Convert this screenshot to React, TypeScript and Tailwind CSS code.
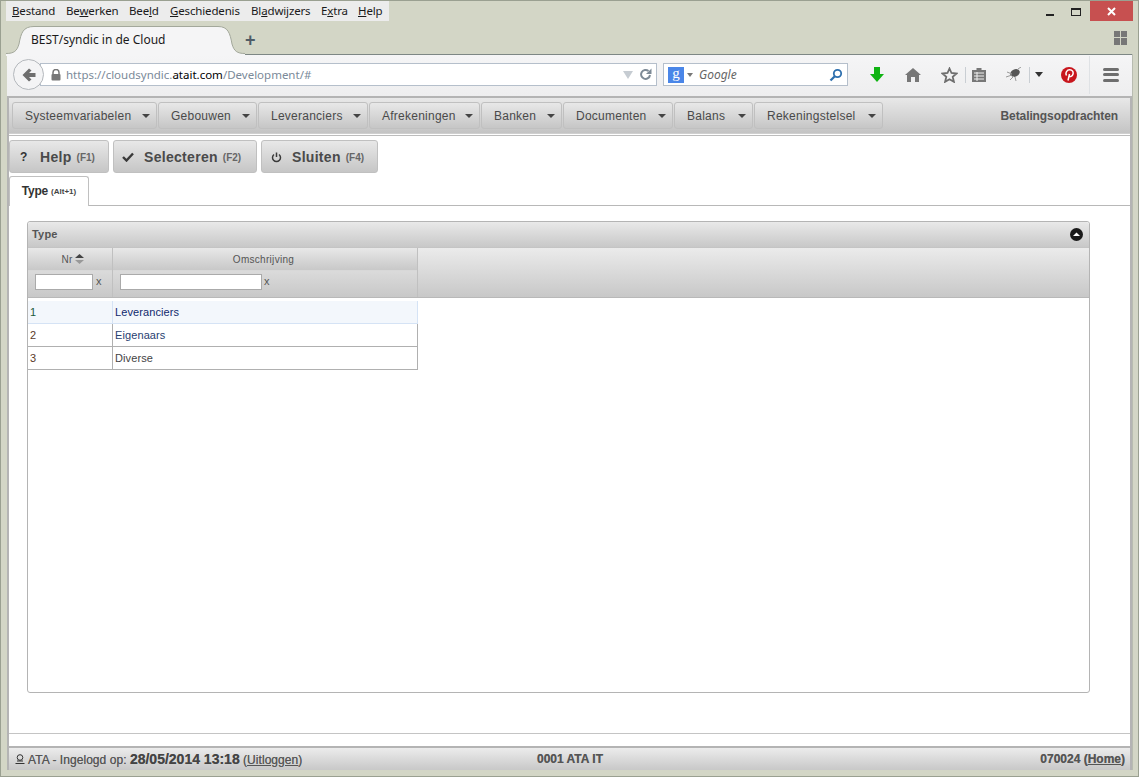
import React from "react";

const firefoxFont = "font-['Noto_Sans','Open_Sans',sans-serif]";

const menuItems: { before: string; key: string; after: string; width: string }[] = [
  { before: "", key: "B", after: "estand", width: "w-[54px]" },
  { before: "Be", key: "w", after: "erken", width: "w-[63px]" },
  { before: "Bee", key: "l", after: "d", width: "w-[41px]" },
  { before: "", key: "G", after: "eschiedenis", width: "w-[81px]" },
  { before: "Bl", key: "a", after: "dwijzers", width: "w-[70px]" },
  { before: "E", key: "x", after: "tra", width: "w-[37px]" },
  { before: "", key: "H", after: "elp", width: "w-[31px]" },
];

const navMenus = [
  { label: "Systeemvariabelen", width: "w-[145px]" },
  { label: "Gebouwen", width: "w-[99px]" },
  { label: "Leveranciers", width: "w-[110px]" },
  { label: "Afrekeningen", width: "w-[111px]" },
  { label: "Banken", width: "w-[81px]" },
  { label: "Documenten", width: "w-[110px]" },
  { label: "Balans", width: "w-[79px]" },
  { label: "Rekeningstelsel", width: "w-[129px]" },
];

const rows = [
  { nr: "1", name: "Leveranciers", rowCls: "bg-[#f3f7fc] border-[#d5e3f5]", nameCls: "text-[#11296e]", nrCls: "text-[#1c5a3a]" },
  { nr: "2", name: "Eigenaars", rowCls: "bg-white border-[#b0b0b0]", nameCls: "text-[#27406f]", nrCls: "text-[#5a3a2a]" },
  { nr: "3", name: "Diverse", rowCls: "bg-white border-[#b0b0b0]", nameCls: "text-[#444]", nrCls: "text-[#5a3a2a]" },
];

function BrowserTab() {
  return (
    <div className="relative z-10 h-[28px] w-[250px]">
      <svg className="absolute left-0 top-0" width="250" height="30" viewBox="0 0 250 30">
        <path
          d="M0 27.5 C8 27.5 11 25 13 18 C15 7 17 .5 28 .5 L212 .5 C222 .5 224 7 226 18 C228 25 231 27.5 239 27.5 V30 H0 Z"
          fill="#f5f5f6"
        />
        <path
          d="M0 27.5 C8 27.5 11 25 13 18 C15 7 17 .5 28 .5 L212 .5 C222 .5 224 7 226 18 C228 25 231 27.5 239 27.5"
          fill="none"
          stroke="#a3a89b"
          strokeWidth="1"
        />
      </svg>
      <span className={`absolute left-[25px] top-[5px] text-[12px] text-[#1a1a1a] ${firefoxFont}`}>BEST/syndic in de Cloud</span>
    </div>
  );
}

function BackButton() {
  return (
    <div className="relative z-10 flex h-[31px] w-[31px] items-center justify-center rounded-full border border-[#b4b8bc] bg-[#f4f4f5]">
      <svg width="16" height="16" viewBox="0 0 16 16">
        <path d="M8 1.5 L1.5 8 L8 14.5 L10.5 12.5 L8 10 H14.5 V6 H8 L10.5 3.5 Z" fill="#6e6e6e" />
      </svg>
    </div>
  );
}

function Toolbar() {
  return (
    <div className="flex h-[42px] items-center bg-gradient-to-b from-[#f5f5f6] to-[#eeeeef] border-t border-[#7d8784] pb-[2px]">
      <div className="ml-[6px]">
        <BackButton />
      </div>
      {/* url bar */}
      <div className="ml-[-4px] flex h-[23px] w-[617px] items-center border border-[#b5bfcb] bg-white pl-[10px]">
        <svg width="10" height="12" viewBox="0 0 10 12">
          <path d="M2 5 V3.5 a3 3 0 0 1 6 0 V5" fill="none" stroke="#777" strokeWidth="1.5" />
          <rect x="0.5" y="5" width="9" height="6.5" rx="1" fill="#777" />
        </svg>
        <span className={`ml-[5px] text-[11.5px] text-[#7b8a99] ${firefoxFont}`}>
          https://cloudsyndic.<span className="text-black">atait.com</span>/Development/#
        </span>
        <svg className="ml-auto" width="10" height="8" viewBox="0 0 10 8">
          <path d="M0 0 H10 L5 8 Z" fill="#c6ccd2" />
        </svg>
        <svg className="ml-[6px] mr-[4px]" width="13" height="13" viewBox="0 0 13 13">
          <path d="M11 7 A4.5 4.5 0 1 1 9.5 3" fill="none" stroke="#7d8a96" strokeWidth="2" />
          <path d="M12.5 0.5 V6 H7 Z" fill="#7d8a96" />
        </svg>
      </div>
      {/* search box */}
      <div className="ml-[6px] flex h-[23px] w-[185px] items-center border border-[#b5bfcb] bg-white pl-[4px]">
        <div className="flex h-[16px] w-[16px] items-center justify-center bg-[#4a86e8] pb-[3px] text-[15px] leading-none text-white font-['Liberation_Serif',serif]">
          g
        </div>
        <svg className="ml-[3px]" width="6" height="4" viewBox="0 0 6 4">
          <path d="M0 0 H6 L3 4 Z" fill="#777" />
        </svg>
        <span className={`ml-[6px] text-[12px] italic text-[#666] ${firefoxFont}`}>Google</span>
        <svg className="ml-auto mr-[4px]" width="14" height="14" viewBox="0 0 14 14">
          <circle cx="8.5" cy="5.5" r="3.7" fill="none" stroke="#2d6fae" strokeWidth="1.8" />
          <path d="M5.8 8.2 L1.5 12.5" stroke="#2d6fae" strokeWidth="2.2" />
        </svg>
      </div>
      {/* download arrow */}
      <svg className="ml-[22px]" width="14" height="15" viewBox="0 0 14 15">
        <path d="M4 0 H10 V7 H14 L7 15 L0 7 H4 Z" fill="#0fb312" />
      </svg>
      {/* home */}
      <svg className="ml-[21px]" width="16" height="14" viewBox="0 0 16 14">
        <path d="M8 0 L16 7 H14 V14 H10 V9 H6 V14 H2 V7 H0 Z" fill="#777" />
      </svg>
      {/* bookmark star */}
      <svg className="ml-[20px]" width="17" height="16" viewBox="0 0 17 16">
        <path d="M8.5 1.5 L10.5 6 L15.5 6.5 L11.7 9.8 L12.9 14.8 L8.5 12.2 L4.1 14.8 L5.3 9.8 L1.5 6.5 L6.5 6 Z" fill="none" stroke="#6e6e6e" strokeWidth="1.8" />
      </svg>
      <div className="ml-[7px] h-[16px] w-px bg-[#c9ced3]" />
      {/* clipboard list */}
      <svg className="ml-[6px]" width="14" height="15" viewBox="0 0 14 15">
        <path d="M0 3 H4.5 V1 H9.5 V3 H14 V15 H0 Z" fill="#777" />
        <path d="M2 6 H12 M2 9 H12 M2 12 H12 M5 5 V14" stroke="#f1f1f1" strokeWidth="1" />
      </svg>
      {/* bug addon */}
      <svg className="ml-[19px]" width="17" height="15" viewBox="0 0 17 15">
        <ellipse cx="10" cy="6" rx="5" ry="3.6" fill="#555" transform="rotate(-25 10 6)" />
        <path d="M2 5 L7 7 M1 10 L7 8 M5 13 L9 9 M10 10 L11 14 M13 2 L16 0" stroke="#999" strokeWidth="1" />
      </svg>
      <div className="ml-[7px] h-[16px] w-px bg-[#c9ced3]" />
      <svg className="ml-[5px]" width="8" height="5" viewBox="0 0 8 5">
        <path d="M0 0 H8 L4 5 Z" fill="#333" />
      </svg>
      {/* pinterest */}
      <div className="ml-[18px] flex h-[16px] w-[16px] items-center justify-center rounded-full bg-[#c8161d]">
        <svg width="9" height="12" viewBox="0 0 9 12">
          <path d="M3 11.5 L4.5 5 M1.5 6.5 C0 3.5 2 .8 4.7 .8 C7.5 .8 8.5 3 8 5 C7.5 7.5 5 8.2 3.8 6.8" fill="none" stroke="#fff" strokeWidth="1.5" />
        </svg>
      </div>
      <div className="ml-[12px] h-[38px] w-px bg-[#dfe2e5]" />
      {/* hamburger */}
      <div className="ml-[13px] flex w-[16px] flex-col gap-[2.5px]">
        <div className="h-[3px] rounded-sm bg-[#6e6e6e]" />
        <div className="h-[3px] rounded-sm bg-[#6e6e6e]" />
        <div className="h-[3px] rounded-sm bg-[#6e6e6e]" />
      </div>
    </div>
  );
}

function NavMenu({ label, width }: { label: string; width: string }) {
  return (
    <div className={`flex h-[27px] items-center justify-between rounded-[3px] border border-[#c0c0c0] bg-gradient-to-b from-[#e8e8e8] to-[#c6c6c6] pl-[12px] pr-[6px] ${width}`}>
      <span className="tracking-[0.25px] text-[#4a4a4a]">{label}</span>
      <svg width="8" height="4" viewBox="0 0 8 4">
        <path d="M0 0 H8 L4 4 Z" fill="#444" />
      </svg>
    </div>
  );
}

function ActionButton({ icon, label, fkey, width }: { icon: React.ReactNode; label: string; fkey: string; width: string }) {
  return (
    <div className={`flex h-[33px] items-center rounded-[3px] border border-[#c0c0c0] bg-gradient-to-b from-[#e8e8e8] to-[#c6c6c6] pl-[8px] pt-[1px] ${width}`}>
      <span className="flex w-[22px] justify-start">{icon}</span>
      <span className="text-[14px] font-bold tracking-[0.3px] text-[#4a4a4a]">{label}</span>
      <span className="ml-[5px] text-[10px] font-bold text-[#666]">{fkey}</span>
    </div>
  );
}

function ItemTable() {
  return (
    <div className="w-[390px] text-[11px]">
      {rows.map((r) => (
        <div key={r.nr} className={`flex h-[23px] items-center border-b border-r ${r.rowCls}`}>
          <span className={`h-full w-[85px] border-r pl-[2px] leading-[22px] ${r.rowCls} ${r.nrCls}`}>{r.nr}</span>
          <span className={`pl-[2px] tracking-[0.1px] ${r.nameCls}`}>{r.name}</span>
        </div>
      ))}
    </div>
  );
}

function TypePanel() {
  return (
    <div className="ml-[18px] mr-[40px] mt-[15px] mb-[40px] flex flex-1 flex-col rounded-[3px] border border-[#b4b4b4] bg-white">
      <div className="flex h-[26px] items-center justify-between rounded-t-[3px] border-b border-[#c4c4c4] bg-gradient-to-b from-[#e9e9e9] to-[#c8c8c8] pl-[4px] pr-[6px]">
        <span className="text-[11px] font-bold tracking-[0.2px] text-[#555]">Type</span>
        <svg width="13" height="13" viewBox="0 0 13 13">
          <circle cx="6.5" cy="6.5" r="6.5" fill="#1a1a1a" />
          <path d="M3 8 L6.5 4.5 L10 8 Z" fill="#fff" />
        </svg>
      </div>
      {/* grid header: column captions and filter row */}
      <div className="flex h-[50px] border-b border-[#b8b8b8] bg-gradient-to-b from-[#ebebeb] to-[#c8c8c8] text-[10px] text-[#555]">
        <div className="flex w-[85px] flex-col border-r border-[#c0c0c0]">
          <div className="flex h-[23px] items-center justify-center gap-[3px] border-b border-[#d8d8d8] bg-gradient-to-b from-[#e8e8e8] to-[#c8c8c8] pl-[6px]">
            <span className="tracking-[0.2px]">Nr</span>
            <svg width="9" height="10" viewBox="0 0 9 10">
              <path d="M0 4 L4.5 0 L9 4 Z" fill="#444" />
              <path d="M0 6 L4.5 10 L9 6 Z" fill="#999" />
            </svg>
          </div>
          <div className="flex flex-1 items-start pl-[7px] pt-[3px]">
            <div className="h-[16px] w-[58px] border border-[#aaa] bg-white" />
            <span className="ml-[3px] text-[11px] leading-[14px]">x</span>
          </div>
        </div>
        <div className="flex w-[305px] flex-col border-r border-[#c0c0c0]">
          <div className="flex h-[23px] items-center justify-center border-b border-[#d8d8d8] bg-gradient-to-b from-[#e8e8e8] to-[#c8c8c8] pr-[3px]">
            <span className="tracking-[0.3px]">Omschrijving</span>
          </div>
          <div className="flex flex-1 items-start pl-[7px] pt-[3px]">
            <div className="h-[16px] w-[142px] border border-[#aaa] bg-white" />
            <span className="ml-[2px] text-[11px] leading-[14px]">x</span>
          </div>
        </div>
      </div>
      <div className="mt-[3px]">
        <ItemTable />
      </div>
    </div>
  );
}

export default function App() {
  return (
    <div className="flex h-[777px] w-[1139px] flex-col overflow-hidden border border-[#9aa091] bg-[#d3d6c6]">
      {/* window title row with the classic menu */}
      <div className="flex h-[21px] items-start justify-between pl-[5px]">
        <div className={`flex h-[20px] items-center bg-[#ececec] pl-[6px] text-[11.5px] text-[#1a1a1a] ${firefoxFont}`}>
          {menuItems.map((m) => (
            <span key={m.key + m.after} className={`whitespace-nowrap tracking-[-0.15px] ${m.width}`}>
              {m.before}
              <span className="underline">{m.key}</span>
              {m.after}
            </span>
          ))}
        </div>
        <div className="flex items-start">
          <div className="flex h-[20px] w-[25px] items-center justify-center">
            <div className="mt-[7px] h-[2px] w-[8px] bg-[#222]" />
          </div>
          <div className="flex h-[20px] w-[28px] items-center justify-center">
            <div className="mt-[2px] h-[8px] w-[10px] border border-t-2 border-[#222]" />
          </div>
          <div className="mr-[5px] flex h-[20px] w-[43px] items-center justify-center bg-[#c75050]">
            <svg width="9" height="9" viewBox="0 0 9 9">
              <path d="M1 1 L8 8 M8 1 L1 8" stroke="#fff" strokeWidth="2" />
            </svg>
          </div>
        </div>
      </div>

      {/* tab strip */}
      <div className="mt-[4px] flex h-[28px] items-center pl-[5px]">
        <BrowserTab />
        <span className="relative z-10 ml-[-11px] text-[18px] font-bold leading-none text-[#4f5c66] font-['Liberation_Sans',sans-serif]">+</span>
        <div className="ml-auto mr-[11px] mt-[-4px] grid grid-cols-2 gap-[1px]">
          <div className="h-[6px] w-[6px] bg-[#777]" />
          <div className="h-[6px] w-[6px] bg-[#777]" />
          <div className="h-[7px] w-[6px] bg-[#777]" />
          <div className="h-[7px] w-[6px] bg-[#777]" />
        </div>
      </div>

      <div className="ml-[6px] mr-[5px] flex flex-1 flex-col border-r border-[#b8bcb0]">
        <Toolbar />

        {/* application page */}
        <div className="flex flex-1 flex-col border-x-2 border-t-2 border-[#b4b4b4] bg-white font-['Liberation_Sans',Arial,sans-serif] text-[12px]">
          <div className="flex h-[36px] items-center justify-between border-b border-[#cfcfcf] bg-gradient-to-b from-[#e8e8e8] to-[#c4c4c4] pl-[3px] pr-[12px]">
            <div className="flex gap-[1px]">
              {navMenus.map((m) => (
                <NavMenu key={m.label} label={m.label} width={m.width} />
              ))}
            </div>
            <span className="font-bold text-[#555] tracking-[-0.1px]">Betalingsopdrachten</span>
          </div>
          <div className="h-[2px] border-b border-[#bdbdbd] bg-white" />

          <div className="mt-[4px] flex gap-[4px]">
            <ActionButton
              width="w-[100px]"
              label="Help"
              fkey="(F1)"
              icon={<span className="ml-[2px] text-[12px] font-bold text-[#333]">?</span>}
            />
            <ActionButton
              width="w-[144px]"
              label="Selecteren"
              fkey="(F2)"
              icon={
                <svg width="12" height="10" viewBox="0 0 12 10">
                  <path d="M1 5 L4.5 8.5 L11 1.5" fill="none" stroke="#3a3a3a" strokeWidth="2.4" />
                </svg>
              }
            />
            <ActionButton
              width="w-[117px]"
              label="Sluiten"
              fkey="(F4)"
              icon={
                <svg className="ml-[1px]" width="11" height="11" viewBox="0 0 11 11">
                  <path d="M3 2.5 A4 4 0 1 0 8 2.5" fill="none" stroke="#3a3a3a" strokeWidth="1.5" />
                  <path d="M5.5 0.5 V5" stroke="#3a3a3a" strokeWidth="1.5" />
                </svg>
              }
            />
          </div>

          {/* tab header */}
          <div className="mt-[3px] flex h-[30px] border-b border-[#b8b8b8]">
            <div className="mb-[-1px] flex w-[80px] items-center justify-center gap-[3px] rounded-t-[3px] border border-b-0 border-[#c0c0c0] bg-white pb-[1px]">
              <span className="font-bold text-[#333] tracking-[-0.2px]">Type</span>
              <span className="mt-[2px] text-[8px] font-bold text-[#444]">(Alt+1)</span>
            </div>
          </div>

          <TypePanel />

          {/* status bar */}
          <div className="h-[13px] border-t border-[#c4c4c4] bg-white" />
          <div className="flex h-[24px] items-center justify-between border-t-2 border-[#b4b4b4] bg-gradient-to-b from-[#ececec] to-[#c8c8c8] pl-[6px] pr-[5px] text-[12px] text-[#555] [text-shadow:0_0_0.5px_#777]">
            <div className="flex w-[522px] items-center">
              <svg width="10" height="10" viewBox="0 0 10 10">
                <circle cx="5" cy="3.5" r="2.8" fill="none" stroke="#333" strokeWidth="1" />
                <path d="M0.5 9.5 H9.5 M2 7 H8" stroke="#333" strokeWidth="1.2" />
              </svg>
              <span className="ml-[3px] whitespace-nowrap tracking-[0.05px]">
                ATA - Ingelogd op: <b className="text-[14px] tracking-normal text-[#444]">28/05/2014 13:18</b> (<span className="underline">Uitloggen</span>)
              </span>
            </div>
            <span className="font-bold">0001 ATA IT</span>
            <span className="ml-auto whitespace-nowrap font-bold">
              070024 (<span className="underline">Home</span>)
            </span>
          </div>
        </div>
      </div>
      <div className="h-[6px]" />
    </div>
  );
}
